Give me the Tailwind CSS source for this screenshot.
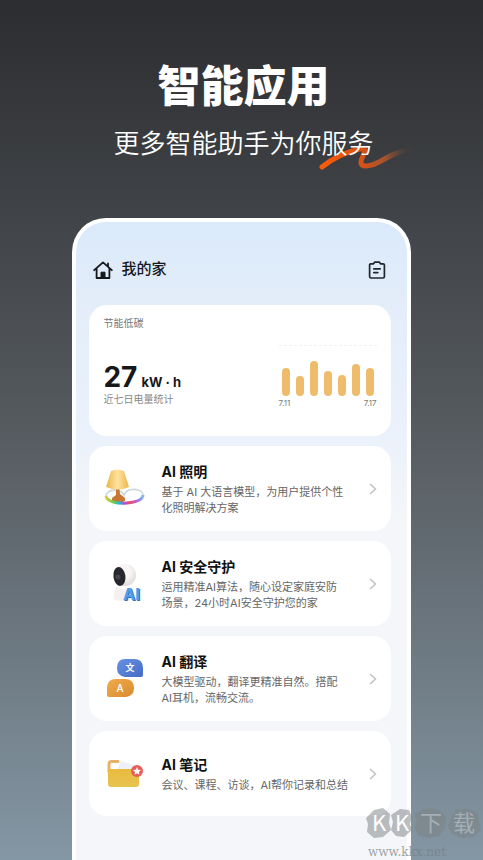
<!DOCTYPE html>
<html lang="zh-CN">
<head>
    <meta charset="UTF-8">
    <meta name="viewport" content="width=device-width, initial-scale=1.0">
    <title>智能应用</title>
    <script src="https://cdn.jsdelivr.net/npm/@tailwindcss/browser@4"></script>
</head>
<body class="font-[Inter,'Noto_Sans_CJK_SC',sans-serif]">
    <div class="relative flex min-h-screen flex-col overflow-hidden bg-linear-to-b from-[#2c2d30] via-[#565b60] to-[#8497a4]">
        <!-- Headline -->
        <header class="pt-[58px] pl-1 text-center text-white">
            <h1 class="text-[43px] leading-14 font-black">智能应用</h1>
            <p class="relative mx-auto mt-[10px] w-fit text-[26px] leading-10 font-[350]">
                <svg class="absolute top-[22px] -right-10 h-7 w-24" viewBox="0 0 96 28" fill="none" stroke-linecap="round" stroke-linejoin="round">
                    <defs>
                        <linearGradient id="stroke" x1="0" x2="96" y1="0" y2="0" gradientUnits="userSpaceOnUse">
                            <stop offset="0" stop-color="#fb5d0c"/>
                            <stop offset=".4" stop-color="#e2520f"/>
                            <stop offset=".7" stop-color="#a4532f"/>
                            <stop offset="1" stop-color="#3b3d40" stop-opacity="0"/>
                        </linearGradient>
                    </defs>
                    <path d="M4 21C14 13 27 6 42 3C53 1 42 11 43 17C44 22 54 20 61 16C72 10 81 5 94 3" stroke="url(#stroke)" stroke-width="5"/>
                </svg>
                <span class="relative">更多智能助手为你服务</span>
            </p>
        </header>

        <!-- Phone -->
        <main class="mx-auto mt-[54px] w-[70%] flex-1 rounded-t-[34px] border-4 border-b-0 border-white bg-[#f4f6f9] bg-[linear-gradient(#daeafa,#e4edf9_90px,#eaf1fb_200px,#f4f6f9_300px)] pr-4 pb-11 pl-[13px]">
            <div class="flex h-[83px] items-center justify-between px-1 pt-3">
                <h2 class="flex items-center gap-2 text-[15px] font-medium text-[#15181c]">
                    <svg class="size-5" viewBox="0 0 20 20" fill="none" stroke="currentColor" stroke-width="1.8" stroke-linecap="round" stroke-linejoin="round">
                        <path d="M1.2 10.2L10 2.4L18.8 10.2M3.6 8.5V18H16.4V8.5M15 6.3V3.4"/>
                        <path d="M8 17.5V12.2H12V17.5Z" fill="currentColor" stroke-width="1"/>
                    </svg>
                    我的家
                </h2>
                <button aria-label="清单" class="text-[#20262d]">
                    <svg class="size-5" viewBox="0 0 20 20" fill="none" stroke="currentColor" stroke-width="1.7" stroke-linecap="round" stroke-linejoin="round">
                        <path d="M6.5 3.8H3.8Q2.6 3.8 2.6 5V16.5Q2.6 18 4 18H16Q17.4 18 17.4 16.5V5Q17.4 3.8 16.2 3.8H13.5L12.4 2.2H7.6Z"/>
                        <path d="M6.8 8.8H13.2M6.8 12.6H10.8"/>
                    </svg>
                </button>
            </div>

            <!-- Energy card -->
            <section class="h-[131px] rounded-[18px] bg-white px-[14px] pt-2">
                <p class="text-[10px] leading-5 text-[#777]">节能低碳</p>
                <div class="flex justify-between">
                    <div class="pt-7">
                        <p class="flex items-baseline gap-1 font-bold text-[#17181b]"><span class="text-[28px] leading-8">27</span><span class="text-[13px] leading-4">kW · h</span></p>
                        <p class="text-[10px] leading-3 text-[#888]">近七日电量统计</p>
                    </div>
                    <div class="mt-3 w-[98px] border-t border-dashed border-[#f1f1f1]">
                        <div class="flex h-[50px] items-end justify-between px-[3px]">
                            <i class="h-7 w-[8px] rounded-full bg-[#eebc6a]"></i>
                            <i class="h-5 w-[8px] rounded-full bg-[#eebc6a]"></i>
                            <i class="h-[35px] w-[8px] rounded-full bg-[#eebc6a]"></i>
                            <i class="h-[25px] w-[8px] rounded-full bg-[#eebc6a]"></i>
                            <i class="h-[21px] w-[8px] rounded-full bg-[#eebc6a]"></i>
                            <i class="h-8 w-[8px] rounded-full bg-[#eebc6a]"></i>
                            <i class="h-7 w-[8px] rounded-full bg-[#eebc6a]"></i>
                        </div>
                        <p class="flex justify-between text-[8px] leading-[14px] text-[#777]"><span>7.11</span><span>7.17</span></p>
                    </div>
                </div>
            </section>

            <!-- Feature list -->
            <nav class="mt-[10px] flex flex-col gap-[10px]">
                <a href="#light" class="flex h-[85px] items-center rounded-[18px] bg-white px-3">
                    <svg class="size-12 shrink-0" viewBox="0 0 48 48" fill="none">
                        <defs>
                            <linearGradient id="shade" x1="6" x2="27" y1="0" y2="0" gradientUnits="userSpaceOnUse">
                                <stop stop-color="#edb850"/><stop offset=".5" stop-color="#ffe3a0"/><stop offset="1" stop-color="#efb851"/>
                            </linearGradient>
                            <linearGradient id="strip" x1="5" x2="43" y1="0" y2="0" gradientUnits="userSpaceOnUse">
                                <stop stop-color="#e5c93f"/><stop offset=".2" stop-color="#63cf50"/><stop offset=".35" stop-color="#22b6dc"/>
                                <stop offset=".5" stop-color="#b44bd8"/><stop offset=".65" stop-color="#f0505e"/><stop offset=".8" stop-color="#b25ee6"/><stop offset="1" stop-color="#75c8ef"/>
                            </linearGradient>
                        </defs>
                        <path d="M5 31C5 24 19 23 23 30C26 22 42 23 42 30" stroke="#cbd8dc" stroke-width="1.8"/>
                        <path d="M15 20H18L19 29L24 33V36C20 38 14 38 11 36V33L15 30Z" fill="#c77733"/>
                        <path d="M10 6Q16.5 3 23 6L28 22Q17 27 5 22Z" fill="url(#shade)"/>
                        <path d="M5 31C6 37 17 39 26 38C36 37 42 34 42 30" stroke="url(#strip)" stroke-width="3"/>
                    </svg>
                    <div class="ml-3 flex-1">
                        <h3 class="text-sm font-bold text-[#111]">AI 照明</h3>
                        <p class="mt-[2px] text-[11px] leading-4 whitespace-nowrap text-[#666]">基于 AI 大语言模型，为用户提供个性<br>化照明解决方案</p>
                    </div>
                    <svg class="h-3 w-3 shrink-0" viewBox="0 0 12 12" fill="none" stroke="#bfbfbf" stroke-width="1.4"><path d="M3 1L8.500 6L3 11"/></svg>
                </a>
                <a href="#guard" class="flex h-[85px] items-center rounded-[18px] bg-white px-3">
                    <svg class="size-12 shrink-0" viewBox="0 0 48 48">
                        <defs>
                            <radialGradient id="cam" cx=".4" cy=".35" r=".7"><stop offset=".5" stop-color="#f8f5f4"/><stop offset="1" stop-color="#ded9d8"/></radialGradient>
                        </defs>
                        <path d="M15 27Q25 32 31 27L33 39Q24 43 14 40Q12 39 13 35Z" fill="#f3f0ef"/>
                        <circle cx="24" cy="15" r="11" fill="url(#cam)"/>
                        <ellipse cx="18.500" cy="16.500" rx="6" ry="9.500" fill="#28282b" transform="rotate(-8 18 17)"/>
                        <circle cx="17" cy="17" r="2.500" fill="#45454a"/>
                        <text x="23" y="41" font-family="Inter" font-size="16" font-weight="800" fill="#2d71bd">AI</text>
                        <text x="22" y="40" font-family="Inter" font-size="16" font-weight="800" fill="#4e9ee9">AI</text>
                    </svg>
                    <div class="ml-3 flex-1">
                        <h3 class="text-sm font-bold text-[#111]">AI 安全守护</h3>
                        <p class="mt-[2px] text-[11px] leading-4 whitespace-nowrap text-[#666]">运用精准AI算法，随心设定家庭安防<br>场景，24小时AI安全守护您的家</p>
                    </div>
                    <svg class="h-3 w-3 shrink-0" viewBox="0 0 12 12" fill="none" stroke="#bfbfbf" stroke-width="1.4"><path d="M3 1L8.500 6L3 11"/></svg>
                </a>
                <a href="#translate" class="flex h-[85px] items-center rounded-[18px] bg-white px-3">
                    <svg class="size-12 shrink-0" viewBox="0 0 48 48">
                        <defs>
                            <linearGradient id="blue" x1="0" x2="1" y1="0" y2="1"><stop stop-color="#6792e6"/><stop offset="1" stop-color="#456bc5"/></linearGradient>
                            <linearGradient id="orange" x1="0" x2="1" y1="0" y2="1"><stop stop-color="#f0ac4c"/><stop offset="1" stop-color="#d98b2f"/></linearGradient>
                        </defs>
                        <path d="M24 4H33Q42 4 42 13V20Q42 22 40 22H24Q16 21 16 13Q16 4 24 4Z" fill="url(#blue)"/>
                        <path d="M15 24H24Q33 24 33 33Q33 41 25 42H8Q6 42 6 40V33Q6 24 15 24Z" fill="url(#orange)"/>
                        <text x="29" y="16" text-anchor="middle" font-family="Noto Sans CJK SC" font-size="9" font-weight="700" fill="#fff">文</text>
                        <text x="19" y="37" text-anchor="middle" font-family="Inter" font-size="10" font-weight="500" fill="#fff">A</text>
                    </svg>
                    <div class="ml-3 flex-1">
                        <h3 class="text-sm font-bold text-[#111]">AI 翻译</h3>
                        <p class="mt-[2px] text-[11px] leading-4 whitespace-nowrap text-[#666]">大模型驱动，翻译更精准自然。搭配<br>AI耳机，流畅交流。</p>
                    </div>
                    <svg class="h-3 w-3 shrink-0" viewBox="0 0 12 12" fill="none" stroke="#bfbfbf" stroke-width="1.4"><path d="M3 1L8.500 6L3 11"/></svg>
                </a>
                <a href="#notes" class="flex h-[85px] items-center rounded-[18px] bg-white px-3">
                    <svg class="size-12 shrink-0" viewBox="0 0 48 48">
                        <defs>
                            <linearGradient id="folder" x1="0" x2="0" y1="0" y2="1"><stop stop-color="#e9ba3f"/><stop offset="1" stop-color="#e7c450"/></linearGradient>
                        </defs>
                        <path d="M20 11L34 15V23H14Z" fill="#eef2f8"/>
                        <path d="M8 22V14Q8 11.500 11 11.500H17" fill="none" stroke="#e7b166" stroke-width="3" stroke-linecap="round"/>
                        <path d="M7 19H38V34Q38 37 35 37H10Q7 37 7 34Z" fill="url(#folder)"/>
                        <circle cx="36" cy="21" r="6" fill="#e65d5b"/>
                        <path d="M36 17L37.200 19.700L40 20L37.900 21.900L38.500 24.700L36 23.300L33.500 24.700L34.100 21.900L32 20L34.800 19.700Z" fill="#fff"/>
                    </svg>
                    <div class="ml-3 flex-1">
                        <h3 class="text-sm font-bold text-[#111]">AI 笔记</h3>
                        <p class="mt-[2px] text-[11px] leading-4 whitespace-nowrap text-[#666]">会议、课程、访谈，AI帮你记录和总结</p>
                    </div>
                    <svg class="h-3 w-3 shrink-0" viewBox="0 0 12 12" fill="none" stroke="#bfbfbf" stroke-width="1.4"><path d="M3 1L8.500 6L3 11"/></svg>
                </a>
            </nav>
        </main>

        <!-- Watermark -->
        <div class="absolute right-0 bottom-0 w-[117px]">
            <svg class="h-9 w-full" viewBox="0 0 117 36">
                <g fill="#7b7f82" fill-opacity=".5">
                    <path d="M8 2L17 0L24 6L23 15L25 22L17 29L8 30L1 24L2 16L0 10Z"/>
                    <path d="M34 1L43 2L46 9L44 16L46 22L38 29L30 28L25 22L27 14L25 7Z"/>
                    <path d="M56 2L66 0L74 3L80 9L79 20L73 28L63 30L53 28L49 20L51 12L49 6Z"/>
                    <path d="M90 2L101 1L111 5L113 14L115 22L107 29L96 30L86 26L82 18L86 9Z"/>
                </g>
                <g fill="#fff" font-family="Noto Sans CJK SC" font-size="22" text-anchor="middle">
                    <text x="13" y="23">K</text>
                    <text x="36" y="23">K</text>
                    <text x="65" y="23" fill="#a3afb7">下</text>
                    <text x="98" y="23" fill="#a3afb7">载</text>
                </g>
            </svg>
            <p class="pl-[2px] font-['DejaVu_Serif',serif] text-xs leading-4 text-[#777d82]/70">www.kkx.net</p>
        </div>
    </div>
</body>
</html>
